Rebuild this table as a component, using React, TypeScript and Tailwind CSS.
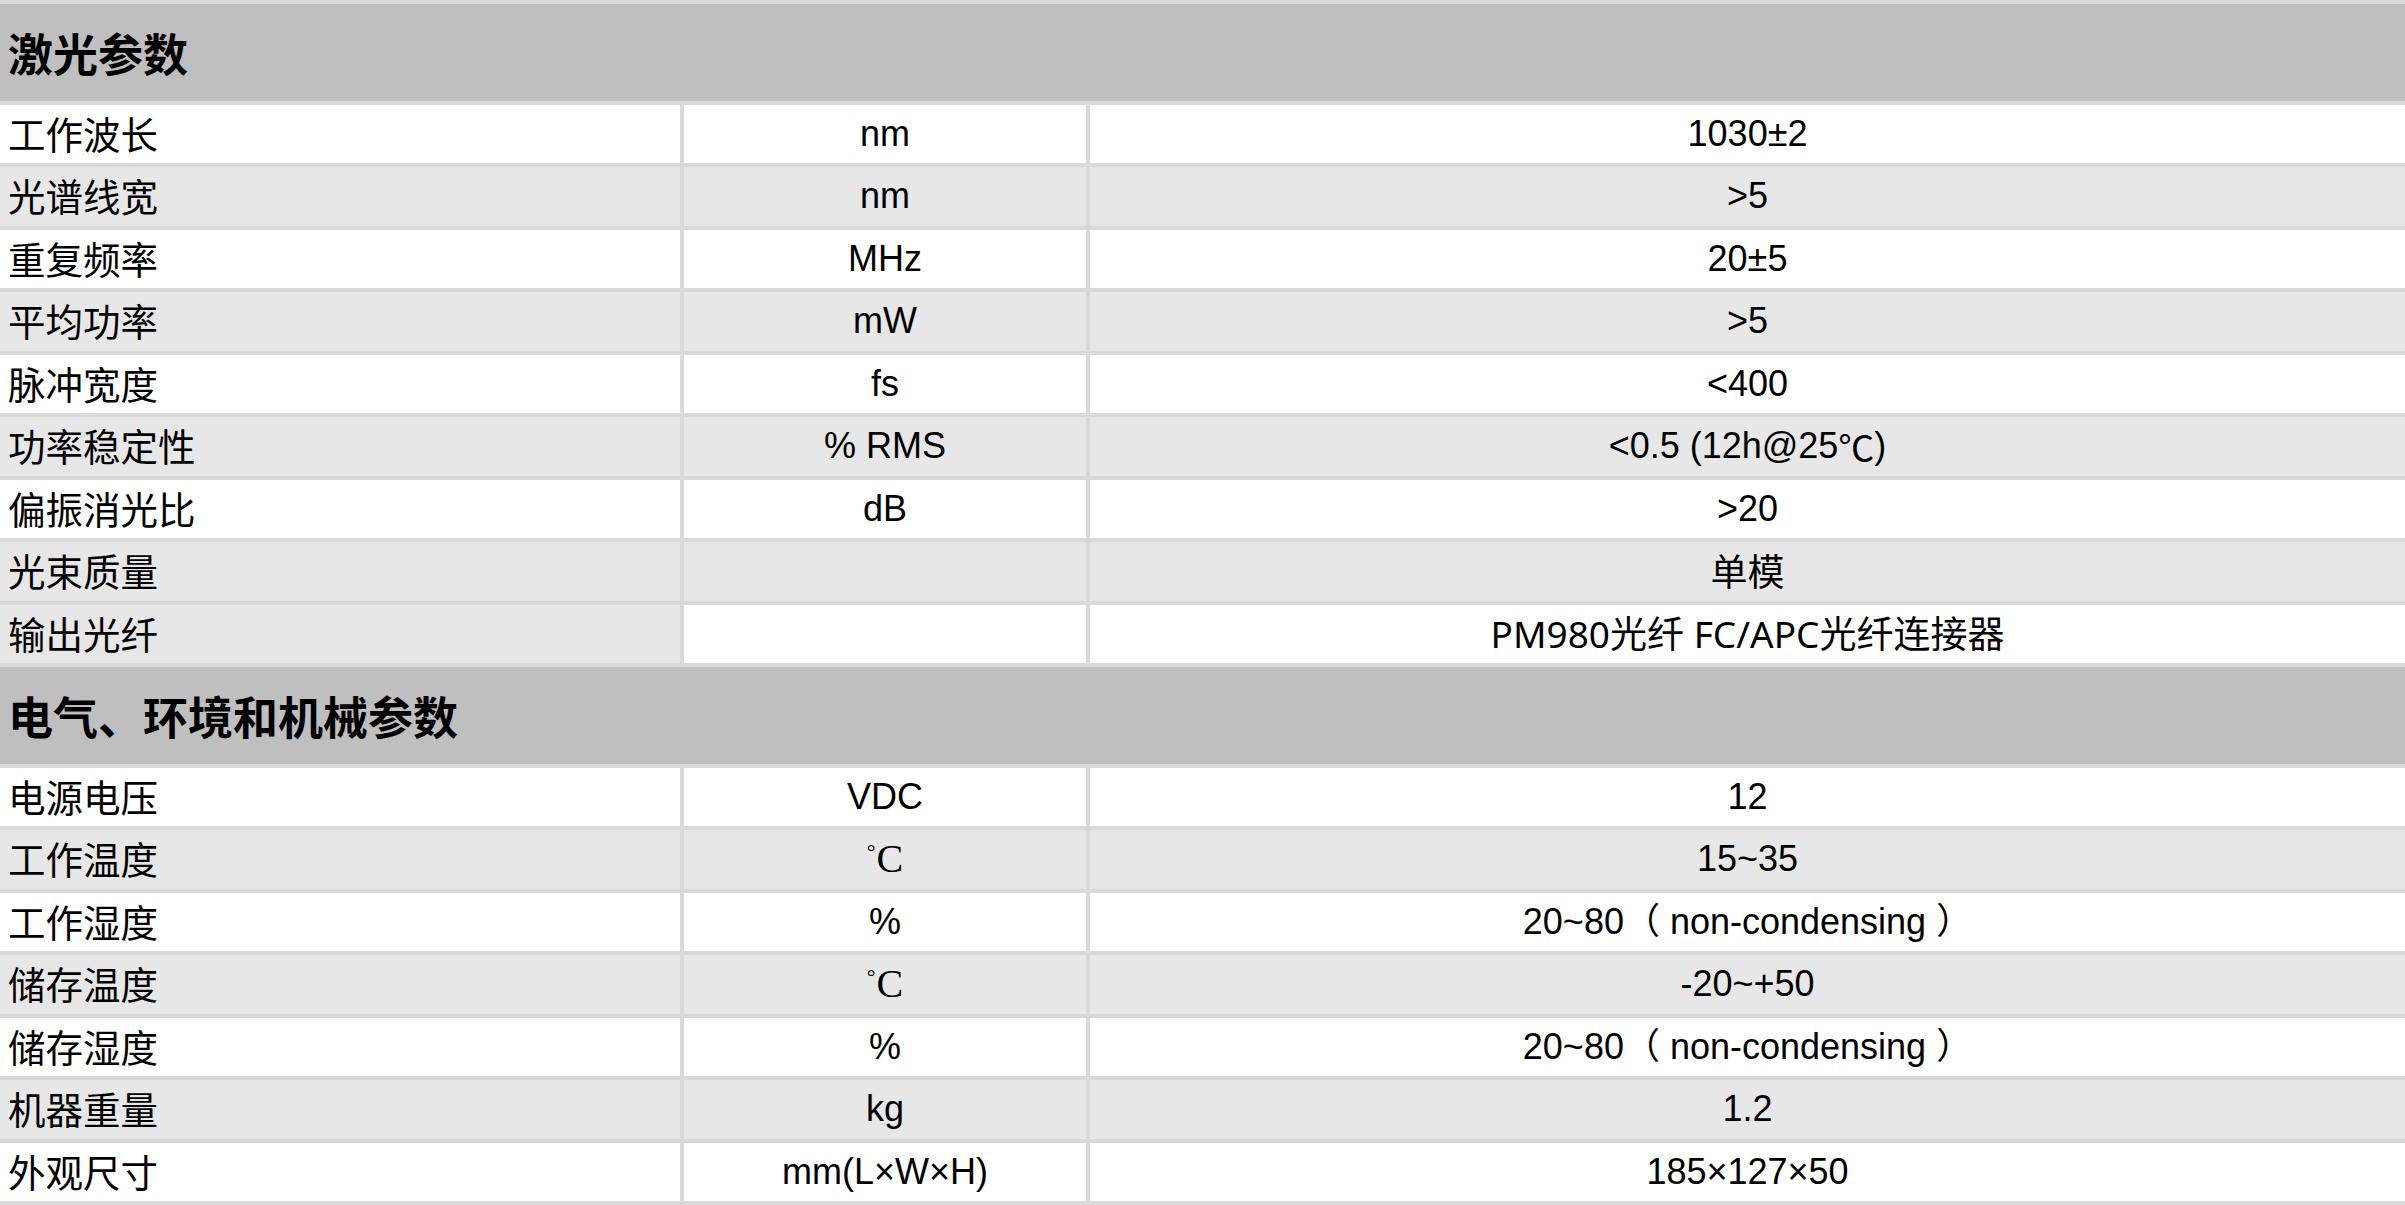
import React from "react";

type Row = {
  label: string;
  unit: React.ReactNode;
  value: React.ReactNode;
  gray: boolean;
  labelGray?: boolean;
  valueCjk?: boolean;
};

const CJK = "font-['Noto_Sans_CJK_SC',sans-serif]";
const LAT = "font-['Liberation_Sans','Noto_Sans_CJK_SC',sans-serif]";

const Celsius = () => (
  <span className="font-['Liberation_Serif',serif] text-[40px] leading-none flex items-start">
    <span className="text-[22px] leading-none mt-[2px] mr-[1px]">°</span>C
  </span>
);

const section1: Row[] = [
  { label: "工作波长", unit: "nm", value: "1030±2", gray: false },
  { label: "光谱线宽", unit: "nm", value: ">5", gray: true },
  { label: "重复频率", unit: "MHz", value: "20±5", gray: false },
  { label: "平均功率", unit: "mW", value: ">5", gray: true },
  { label: "脉冲宽度", unit: "fs", value: "<400", gray: false },
  {
    label: "功率稳定性",
    unit: "% RMS",
    value: (
      <>
        &lt;0.5 (12h@25<span className="font-['Noto_Sans_CJK_SC',sans-serif]">℃</span>)
      </>
    ),
    gray: true,
  },
  { label: "偏振消光比", unit: "dB", value: ">20", gray: false },
  { label: "光束质量", unit: "", value: "单模", gray: true, valueCjk: true },
  { label: "输出光纤", unit: "", value: "PM980光纤 FC/APC光纤连接器", gray: false, labelGray: true, valueCjk: true },
];

const section2: Row[] = [
  { label: "电源电压", unit: "VDC", value: "12", gray: false },
  { label: "工作温度", unit: <Celsius />, value: "15~35", gray: true },
  { label: "工作湿度", unit: "%", value: "20~80（ non-condensing ）", gray: false },
  { label: "储存温度", unit: <Celsius />, value: "-20~+50", gray: true },
  { label: "储存湿度", unit: "%", value: "20~80（ non-condensing ）", gray: false },
  { label: "机器重量", unit: "kg", value: "1.2", gray: true },
  { label: "外观尺寸", unit: "mm(L×W×H)", value: "185×127×50", gray: false },
];

function Header({ title }: { title: string }) {
  return (
    <div className={`h-[96.5px] bg-[#bfbfbf] flex items-center pl-[8px] text-[45px] font-bold text-black ${CJK}`}>
      {title}
    </div>
  );
}

function DataRow({ r }: { r: Row }) {
  const bg = r.gray ? "bg-[#e7e7e7]" : "bg-white";
  const labelBg = r.labelGray || r.gray ? "bg-[#e7e7e7]" : "bg-white";
  return (
    <div className="grid grid-cols-[680px_402px_1fr] gap-x-[4px] h-[58.5px]">
      <div className={`${labelBg} flex items-center pl-[8px] pb-[3px] text-[37.5px] text-black leading-none ${CJK}`}>
        {r.label}
      </div>
      <div className={`${bg} flex items-center justify-center text-[36px] text-black leading-none ${LAT}`}>{r.unit}</div>
      <div
        className={`${bg} flex items-center justify-center text-black leading-none ${
          r.valueCjk ? "text-[37px] font-['Noto_Sans','Noto_Sans_CJK_SC',sans-serif]" : `text-[36px] ${LAT}`
        }`}
      >
        {r.value}
      </div>
    </div>
  );
}

export default function App() {
  return (
    <div className="w-[2405px] h-[1205px] bg-[#d9d9d9] flex flex-col gap-[4px] py-[4px] overflow-hidden">
      <Header title="激光参数" />
      {section1.map((r) => (
        <DataRow key={r.label} r={r} />
      ))}
      <Header title="电气、环境和机械参数" />
      {section2.map((r) => (
        <DataRow key={r.label} r={r} />
      ))}
    </div>
  );
}
